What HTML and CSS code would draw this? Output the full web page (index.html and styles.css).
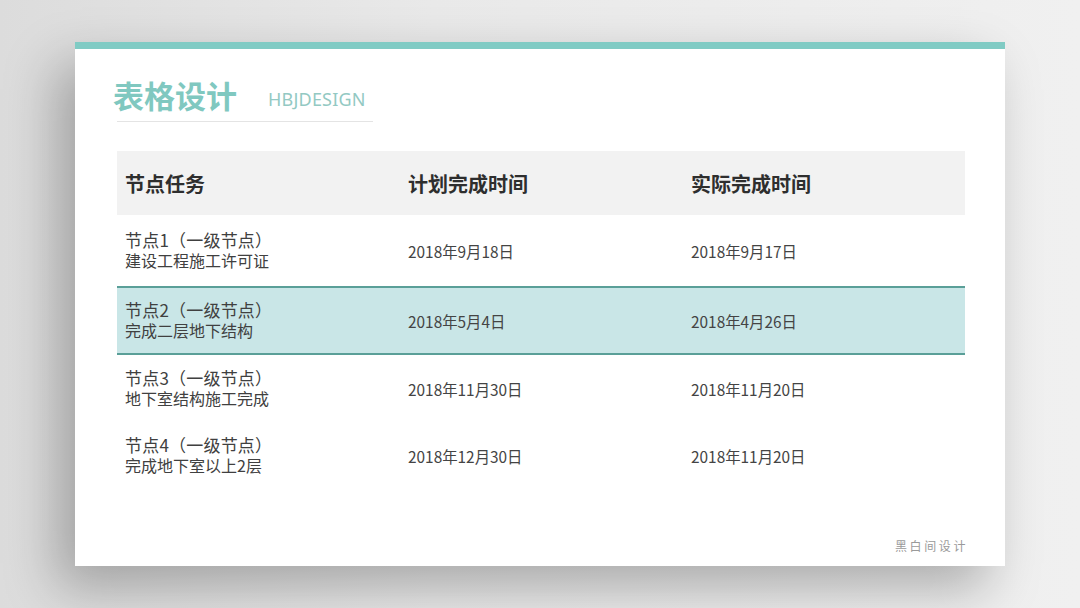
FILE: index.html
```html
<!DOCTYPE html>
<html lang="zh-CN">
<head>
<meta charset="utf-8">
<title>表格设计</title>
<link rel="stylesheet" href="styles.css">
</head>
<body>
<div class="card">
  <div class="head">
    <h1 class="title">表格设计</h1>
    <span class="sub">HBJDESIGN</span>
  </div>
  <div class="table">
    <div class="row th">
      <div class="cell">节点任务</div>
      <div class="cell">计划完成时间</div>
      <div class="cell">实际完成时间</div>
    </div>
    <div class="row r1">
      <div class="cell task"><span class="l1">节点1（一级节点）</span><span class="l2">建设工程施工许可证</span></div>
      <div class="cell date">2018年9月18日</div>
      <div class="cell date">2018年9月17日</div>
    </div>
    <div class="row r2 hl">
      <div class="cell task"><span class="l1">节点2（一级节点）</span><span class="l2">完成二层地下结构</span></div>
      <div class="cell date">2018年5月4日</div>
      <div class="cell date">2018年4月26日</div>
    </div>
    <div class="row r3">
      <div class="cell task"><span class="l1">节点3（一级节点）</span><span class="l2">地下室结构施工完成</span></div>
      <div class="cell date">2018年11月30日</div>
      <div class="cell date">2018年11月20日</div>
    </div>
    <div class="row r4">
      <div class="cell task"><span class="l1">节点4（一级节点）</span><span class="l2">完成地下室以上2层</span></div>
      <div class="cell date">2018年12月30日</div>
      <div class="cell date">2018年11月20日</div>
    </div>
  </div>
  <div class="foot">黑白间设计</div>
</div>
</body>
</html>
```
FILE: styles.css
```css
html, body {
  margin: 0;
  padding: 0;
}
body {
  width: 1080px;
  height: 608px;
  overflow: hidden;
  background: linear-gradient(90deg, #dcdcdc 0%, #e9e9e9 40%, #f0f0f0 100%);
  font-family: "Noto Sans CJK SC", "Noto Sans", sans-serif;
  padding-top: 42px;
  box-sizing: border-box;
}
.card {
  margin-left: 75px;
  width: 930px;
  height: 524px;
  box-sizing: border-box;
  background: #fff;
  border-top: 7px solid #80cbc4;
  box-shadow: -18px 22px 50px rgba(0, 0, 0, 0.28);
  padding: 0 40px 0 42px;
  display: flex;
  flex-direction: column;
}
.head {
  margin-top: 26px;
  width: 256px;
  height: 40px;
  padding-bottom: 6px;
  border-bottom: 1px solid #e4e4e4;
  display: flex;
  align-items: center;
  white-space: nowrap;
}
.title {
  margin: 0 0 0 -4px;
  font-size: 31px;
  font-weight: 700;
  color: #80c8c0;
  line-height: 40px;
}
.sub {
  margin-left: 31px;
  margin-top: 7px;
  font-family: "Noto Sans", sans-serif;
  font-size: 18px;
  font-weight: 400;
  color: #93c9c3;
  letter-spacing: 0.2px;
}
.table {
  margin-top: 29px;
  width: 848px;
}
.row {
  display: grid;
  grid-template-columns: 283px 283px 1fr;
  align-items: center;
  box-sizing: border-box;
}
.cell {
  padding-left: 8px;
  color: #404040;
}
.th {
  height: 64px;
  background: #f2f2f2;
}
.th .cell {
  font-size: 20px;
  font-weight: 700;
  color: #2e2e2e;
}
.r1 { height: 71px; }
.r2 { height: 69px; }
.r3 { height: 67px; }
.r4 { height: 68px; }
.hl {
  background: #c9e6e7;
  border-top: 2px solid #5a9f98;
  border-bottom: 2px solid #5a9f98;
}
.task {
  display: flex;
  flex-direction: column;
  margin-top: -2px;
}
.l1 {
  font-size: 17px;
  line-height: 21px;
  letter-spacing: 0.2px;
}
.l2 {
  font-size: 16px;
  line-height: 21px;
}
.date {
  font-size: 15.4px;
  color: #444;
}
.foot {
  margin-top: auto;
  margin-bottom: 12px;
  align-self: flex-end;
  margin-right: -3px;
  font-size: 12px;
  letter-spacing: 2.6px;
  color: #9a9a9a;
}
```
